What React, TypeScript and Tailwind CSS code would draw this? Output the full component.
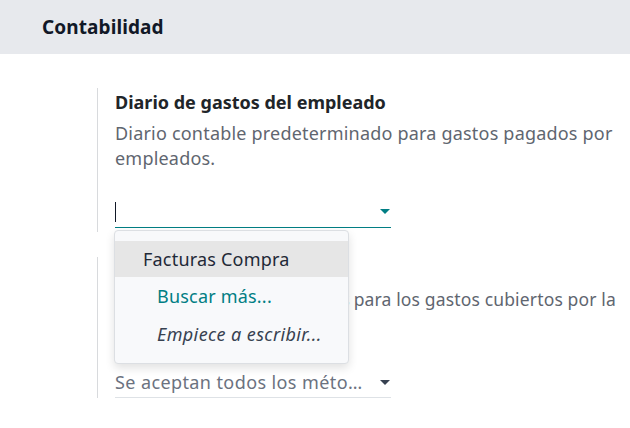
import { useState } from 'react';

const font = { fontFamily: '"Noto Sans", "Open Sans", sans-serif' };

function Caret({ teal }: { teal?: boolean }) {
  return (
    <svg width="10" height="6" viewBox="0 0 10 6" className="shrink-0">
      <path d="M0 0 H10 L5 5 Z" fill={teal ? '#017e84' : '#374151'} />
    </svg>
  );
}

export default function App() {
  const [open] = useState(true);

  return (
    <div className="w-[630px] h-[428px] bg-white overflow-hidden text-[#212529]" style={font}>
      <div className="h-[54px] bg-[#e7e9ed] flex items-center pl-[42px]">
        <h2 className="text-[19px] font-bold text-[#111827] tracking-[0.1px]">Contabilidad</h2>
      </div>

      <div className="relative pl-[97px] pt-[34px]">
        {/* first setting */}
        <div className="border-l border-[#d8dadd] pl-[17px] pr-[6px] h-[144px]">
          <div className="text-[18px] font-bold leading-[24px] pt-[2px]">Diario de gastos del empleado</div>
          <div className="text-[18px] leading-[25px] tracking-[0.2px] text-[#5f6670] mt-[7px]">
            Diario contable predeterminado para gastos pagados por empleados.
          </div>
          <div className="w-[276px] h-[32px] mt-[25px] border-b border-[#017e84] flex items-center justify-between pr-[1px]">
            <span className="w-px h-[20px] bg-[#111827]" />
            <Caret teal />
          </div>
        </div>

        {/* second setting */}
        <div className="border-l border-[#d8dadd] pl-[17px] h-[141px] mt-[25px]">
          <div className="text-[18px] font-bold leading-[24px]">Métodos de pago</div>
          <div className="text-[17.5px] leading-[33px] tracking-[0.15px] text-[#5f6670] mt-[2px]">
            <span className="tracking-[-0.3px]">Métodos de pago disponibles </span>para los gastos cubiertos por la empresa.
          </div>
          <div className="w-[276px] h-[30px] mt-[19px] border-b border-[#dee2e6] flex items-center justify-between pr-[1px]">
            <span className="text-[18px] tracking-[0.4px] text-[#6b7280] truncate">Se aceptan todos los méto…</span>
            <span className="pl-3"><Caret /></span>
          </div>
        </div>

        {open && (
          <div className="absolute left-[114px] top-[176px] w-[235px] h-[134px] bg-[#f8f9fb] border border-[#dcdfe3] rounded-[4px] shadow-[0_4px_10px_rgba(0,0,0,0.12)] py-[10px] text-[18px] tracking-[0.2px]">
            <div className="h-[36px] bg-[#e6e6e6] flex items-center pl-[28px] text-[#1f2937]">Facturas Compra</div>
            <div className="h-[38px] flex items-center pl-[42px] text-[#017e84]">Buscar más...</div>
            <div className="h-[38px] flex items-center pl-[42px] italic tracking-[0.4px] text-[#374151]">Empiece a escribir...</div>
          </div>
        )}
      </div>
    </div>
  );
}
